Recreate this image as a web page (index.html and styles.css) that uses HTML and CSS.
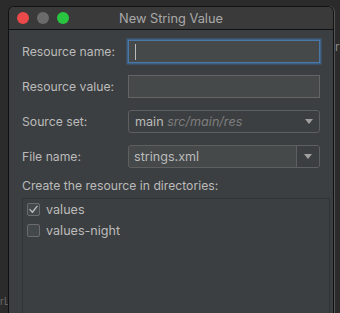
FILE: index.html
```html
<!DOCTYPE html>
<html>
<head>
<meta charset="utf-8">
<link rel="stylesheet" href="styles.css">
</head>
<body>
<div class="bg-text bg-r">r</div>
<div class="bg-text bg-l">rL</div>
<div class="window">
  <div class="titlebar">
    <div class="lights">
      <span class="light red"></span>
      <span class="light gray"></span>
      <span class="light green"></span>
    </div>
    <div class="title">New String Value</div>
    <div></div>
  </div>
  <div class="content">
    <div class="form">
      <label class="label">Resource name:</label>
      <div class="field focused"><span class="caret"></span></div>
      <label class="label">Resource value:</label>
      <div class="field"></div>
      <label class="label">Source set:</label>
      <div class="combo">
        <span class="combo-text">main <i class="hint">src/main/res</i></span>
        <span class="arrow"></span>
      </div>
      <label class="label">File name:</label>
      <div class="combo editable">
        <span class="combo-text">strings.xml</span>
        <span class="combo-btn"><span class="arrow"></span></span>
      </div>
    </div>
    <div class="section">Create the resource in directories:</div>
    <div class="list">
      <div class="row">
        <span class="check checked">
          <svg width="11" height="11" viewBox="0 0 11 11"><path d="M2 5.6 L4.4 8.2 L9 2.4" fill="none" stroke="#bbbbbb" stroke-width="1.4" stroke-linecap="round" stroke-linejoin="round"/></svg>
        </span>
        <span>values</span>
      </div>
      <div class="row">
        <span class="check"></span>
        <span>values-night</span>
      </div>
    </div>
  </div>
</div>
</body>
</html>
```
FILE: styles.css
```css
html, body {
  margin: 0;
  padding: 0;
}
body {
  width: 340px;
  height: 313px;
  overflow: hidden;
  background: #2b2b2b;
  font-family: Inter, "Liberation Sans", sans-serif;
  font-size: 12.2px;
  color: #bbbbbb;
  position: relative;
}
.bg-text {
  position: absolute;
  color: #8a8a8a;
  font-size: 12px;
}
.bg-r { left: 335px; top: 39px; }
.bg-l { left: 0; top: 295px; color: #6a6a6a; font-size: 10px; }
.window {
  position: relative;
  margin: 6px 0 0 8px;
  width: 324px;
  height: 330px;
  border: 1px solid #111111;
  border-bottom: none;
  border-radius: 6px 6px 0 0;
  background: #3c3f41;
  box-shadow: 1px 0 0 #555555;
  overflow: hidden;
}
.titlebar {
  height: 22px;
  background: #3a3a3a;
  border-bottom: 1px solid #111111;
  display: grid;
  grid-template-columns: 1fr auto 1fr;
  align-items: center;
}
.lights {
  display: flex;
  gap: 8px;
  padding-left: 8px;
}
.light {
  width: 12px;
  height: 12px;
  border-radius: 50%;
}
.red { background: #ec4a4a; }
.gray { background: #6b6b6b; }
.green { background: #2ac540; }
.title {
  color: #a9a9a9;
  font-size: 12.8px;
}
.content {
  padding: 10px 12px 0 13px;
}
.form {
  display: grid;
  grid-template-columns: 106px 192px;
  row-gap: 12px;
  align-items: center;
}
.label {
  color: #bbbbbb;
}
.field {
  height: 21px;
  border: 1px solid #646464;
  background: #45494a;
  display: flex;
  align-items: center;
  padding-left: 6px;
}
.field.focused {
  border-color: #4a78a6;
  box-shadow: 0 0 0 1.5px #3d6185;
}
.caret {
  width: 1px;
  height: 16px;
  background: #bbbbbb;
}
.combo {
  height: 21px;
  border: 1px solid #5e6060;
  border-radius: 3px;
  background: #3c3f41;
  display: flex;
  align-items: center;
  justify-content: space-between;
  padding-left: 6px;
  padding-right: 6px;
  font-size: 12.6px;
}
.combo.editable {
  background: #45494a;
  padding-right: 0;
  padding-left: 5px;
  overflow: hidden;
}
.hint {
  color: #7e7e7e;
  font-style: italic;
}
.arrow {
  width: 0;
  height: 0;
  border-left: 4.5px solid transparent;
  border-right: 4.5px solid transparent;
  border-top: 5px solid #a0a0a0;
}
.combo-btn {
  width: 22px;
  height: 21px;
  border-left: 1px solid #5e6060;
  background: #3c3f41;
  display: flex;
  align-items: center;
  justify-content: center;
}
.section {
  margin-top: 10px;
  line-height: 16px;
  color: #bbbbbb;
}
.list {
  margin-top: 4px;
  width: 298px;
  height: 140px;
  border: 1px solid #323335;
  padding: 4px;
  display: flex;
  flex-direction: column;
  gap: 8px;
  font-size: 12.6px;
}
.row {
  display: flex;
  align-items: center;
  gap: 6px;
  height: 13px;
}
.check {
  width: 11px;
  height: 11px;
  border: 1px solid #6b6b6b;
  border-radius: 2px;
  background: #43494a;
  display: flex;
  align-items: center;
  justify-content: center;
}
```
